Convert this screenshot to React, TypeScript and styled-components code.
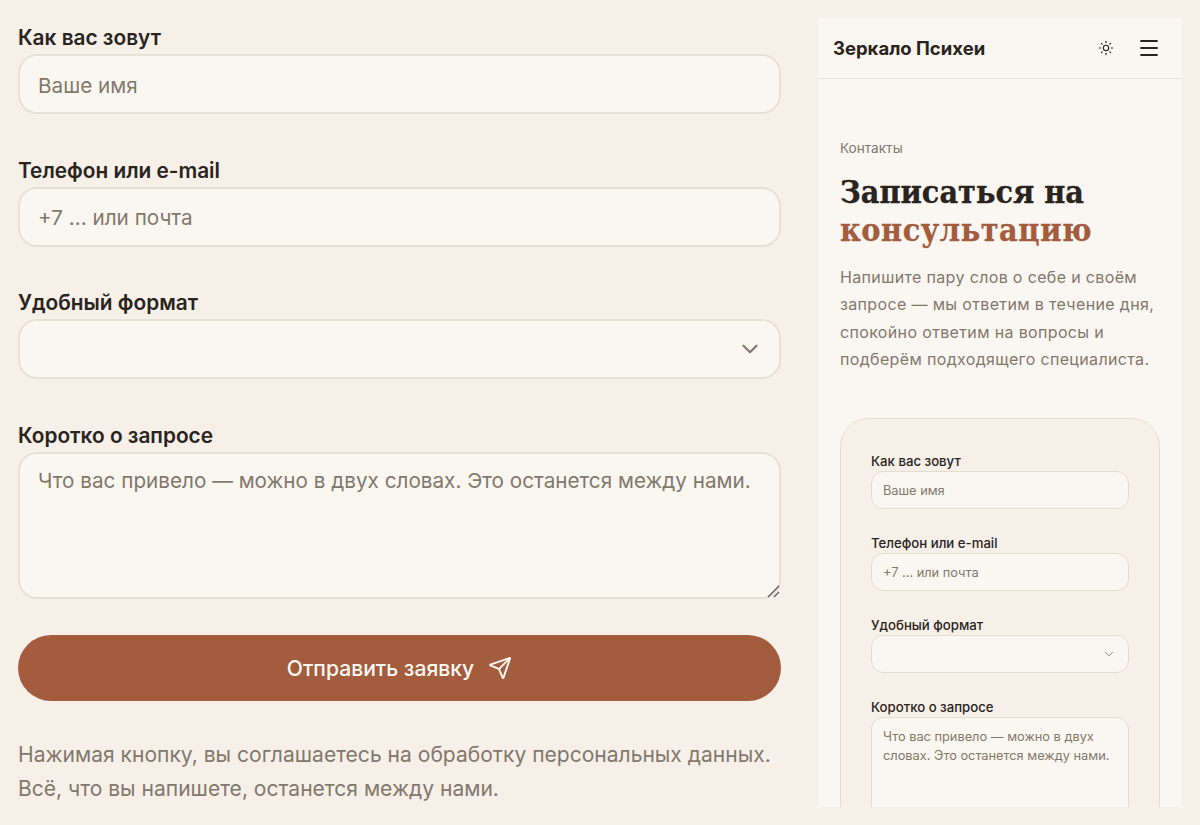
import React from 'react';
import styled, { createGlobalStyle } from 'styled-components';
import { ChevronDown, Menu, Send, Sun } from 'lucide-react';

const GlobalStyle = createGlobalStyle`
  html, body {
    margin: 0;
    height: 825px;
    overflow: hidden;
    background: #f6f0e9;
    font-family: 'Inter', 'Noto Sans', sans-serif;
    color: #2a2420;
  }
  * { box-sizing: border-box; }
`;

type Size = 'lg' | 'sm';

const Page = styled.div`
  display: flex;
  align-items: flex-start;
  height: 825px;
  padding: 0 18px;
  gap: 37px;
`;

const LeftColumn = styled.div`
  width: 763px;
  padding-top: 25px;
`;

const Form = styled.form<{ $size: Size }>`
  display: flex;
  flex-direction: column;
  gap: ${(p) => (p.$size === 'lg' ? '43.67px' : '24px')};
`;

const Field = styled.div`
  display: flex;
  flex-direction: column;
`;

const Label = styled.label<{ $size: Size }>`
  font-size: ${(p) => (p.$size === 'lg' ? '20.8px' : '13.2px')};
  line-height: ${(p) => (p.$size === 'lg' ? '26px' : '20px')};
  margin-bottom: ${(p) => (p.$size === 'lg' ? '3px' : '0')};
  font-weight: ${(p) => (p.$size === 'lg' ? 600 : 500)};
  color: #2a2420;
`;

const controlCss = (p: { $size: Size }) => `
  width: 100%;
  display: block;
  background: #faf7f1;
  border: ${p.$size === 'lg' ? '2px solid #e7e0d5' : '1px solid #e3dcd0'};
  border-radius: ${p.$size === 'lg' ? '19px' : '12px'};
  font-family: inherit;
  color: #2a2420;
  outline: none;
  font-size: ${p.$size === 'lg' ? '20.7px' : '12.8px'};
  padding: 0 ${p.$size === 'lg' ? '18px' : '11px'};
`;

const TextInput = styled.input<{ $size: Size }>`
  ${controlCss}
  height: ${(p) => (p.$size === 'lg' ? '60px' : '38px')};
  padding-top: ${(p) => (p.$size === 'lg' ? '2px' : '0')};
  &::placeholder { color: #83786c; opacity: 1; }
`;

const SelectWrap = styled.div`
  position: relative;
`;

const Select = styled.select<{ $size: Size }>`
  ${controlCss}
  height: ${(p) => (p.$size === 'lg' ? '60px' : '38px')};
  appearance: none;
`;

const Chevron = styled(ChevronDown)<{ $size: Size }>`
  position: absolute;
  top: 50%;
  transform: translateY(-50%);
  right: ${(p) => (p.$size === 'lg' ? '18px' : '13px')};
  color: #83786c;
  pointer-events: none;
`;

const TextAreaWrap = styled.div`
  position: relative;
`;

const TextArea = styled.textarea<{ $size: Size }>`
  ${controlCss}
  height: ${(p) => (p.$size === 'lg' ? '147px' : '110px')};
  padding-top: ${(p) => (p.$size === 'lg' ? '12px' : '9px')};
  padding-bottom: 8px;
  line-height: ${(p) => (p.$size === 'lg' ? '30px' : '19px')};
  resize: none;
  &::placeholder { color: #83786c; opacity: 1; }
`;

const ResizeGrip = styled.svg`
  position: absolute;
  right: 0;
  bottom: 1px;
  width: 14px;
  height: 14px;
  color: #5a5550;
  pointer-events: none;
`;

const SubmitButton = styled.button`
  width: 100%;
  height: 66px;
  margin-top: -7.67px;
  padding-top: 2px;
  display: flex;
  align-items: center;
  justify-content: center;
  gap: 14px;
  border: none;
  border-radius: 33px;
  background: #a45c3e;
  color: #fbf8f2;
  font-family: inherit;
  font-size: 21.1px;
  font-weight: 500;
`;

const Consent = styled.p`
  margin: 37px 0 0;
  font-size: 21.05px;
  line-height: 34px;
  color: #83786c;
`;

const Phone = styled.div`
  width: 364px;
  height: 789px;
  margin-top: 18px;
  overflow: hidden;
  background: #faf7f2;
`;

const PhoneHeader = styled.header`
  height: 61px;
  display: flex;
  align-items: center;
  padding: 0 21px 0 15px;
  border-bottom: 1px solid #e8e2d8;
`;

const Brand = styled.div`
  flex: 1;
  font-size: 18.5px;
  font-weight: 700;
  color: #2a2420;
`;

const HeaderIcons = styled.div`
  display: flex;
  align-items: center;
  gap: 23px;
  color: #2a2420;
`;

const PhoneBody = styled.main`
  padding: 60px 22px 0;
`;

const Eyebrow = styled.div`
  font-size: 13.6px;
  line-height: 18px;
  color: #83786c;
`;

const Heading = styled.h1`
  margin: 16px 0 0;
  font-family: 'DejaVu Serif Condensed', 'DejaVu Serif', 'Liberation Serif', serif;
  font-size: 32px;
  line-height: 38px;
  font-weight: 700;
  -webkit-text-stroke: 0.3px currentColor;
  color: #2a2420;
`;

const Accent = styled.span`
  display: block;
  letter-spacing: 0.55px;
  color: #a45c3e;
`;

const Lead = styled.p`
  margin: 15px 0 0;
  font-size: 16px;
  line-height: 27.3px;
  letter-spacing: 0.35px;
  color: #83786c;
`;

const Card = styled.section`
  margin-top: 45px;
  padding: 32px 30px;
  border: 1px solid #e3dcd0;
  border-radius: 28px;
  background: #f6f0e9;
`;

const FormFields: React.FC<{ size: Size; chevron: number }> = ({ size, chevron }) => (
  <>
    <Field>
      <Label $size={size}>Как вас зовут</Label>
      <TextInput $size={size} placeholder="Ваше имя" />
    </Field>
    <Field>
      <Label $size={size}>Телефон или e-mail</Label>
      <TextInput $size={size} placeholder="+7 ... или почта" />
    </Field>
    <Field>
      <Label $size={size}>Удобный формат</Label>
      <SelectWrap>
        <Select $size={size} />
        <Chevron $size={size} size={chevron} strokeWidth={size === 'lg' ? 2 : 1.6} />
      </SelectWrap>
    </Field>
    <Field>
      <Label $size={size}>Коротко о запросе</Label>
      <TextAreaWrap>
        <TextArea
          $size={size}
          placeholder="Что вас привело — можно в двух словах. Это останется между нами."
        />
        {size === 'lg' && (
          <ResizeGrip viewBox="0 0 14 14" fill="none" stroke="currentColor" strokeWidth="1.2">
            <path d="M1 13 L12 2 M7 13 L12 8" />
          </ResizeGrip>
        )}
      </TextAreaWrap>
    </Field>
  </>
);

export default function App() {
  return (
    <>
      <GlobalStyle />
      <Page>
        <LeftColumn>
          <Form $size="lg">
            <FormFields size="lg" chevron={26} />
            <SubmitButton type="button">
              Отправить заявку
              <Send size={24} strokeWidth={1.9} />
            </SubmitButton>
          </Form>
          <Consent>
            Нажимая кнопку, вы соглашаетесь на обработку персональных данных.
            <br />
            Всё, что вы напишете, останется между нами.
          </Consent>
        </LeftColumn>
        <Phone>
          <PhoneHeader>
            <Brand>Зеркало Психеи</Brand>
            <HeaderIcons>
              <Sun size={16} strokeWidth={1.6} />
              <Menu size={24} strokeWidth={1.8} />
            </HeaderIcons>
          </PhoneHeader>
          <PhoneBody>
            <Eyebrow>Контакты</Eyebrow>
            <Heading>
              Записаться на
              <Accent>консультацию</Accent>
            </Heading>
            <Lead>
              Напишите пару слов о себе и своём запросе — мы ответим в течение дня, спокойно
              ответим на вопросы и подберём подходящего специалиста.
            </Lead>
            <Card>
              <Form $size="sm">
                <FormFields size="sm" chevron={14} />
              </Form>
            </Card>
          </PhoneBody>
        </Phone>
      </Page>
    </>
  );
}
